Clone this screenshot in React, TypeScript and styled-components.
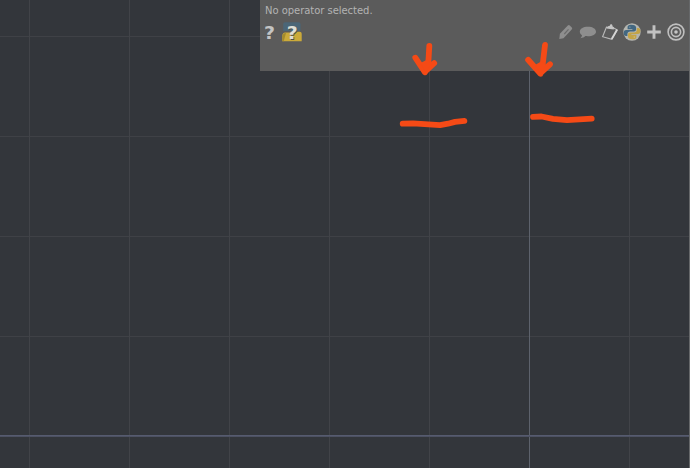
import React from "react";
import styled, { createGlobalStyle } from "styled-components";

const GlobalStyle = createGlobalStyle`
  *, *::before, *::after { box-sizing: border-box; }
  html, body { margin: 0; background: #33363b; overflow: hidden; }
`;

const Network = styled.main`
  position: relative;
  width: 690px;
  height: 468px;
  overflow: hidden;
  display: flex;
  flex-direction: column;
  align-items: flex-end;
  border-right: 1px solid #66686a;
  background-color: #33363b;
  background-image:
    linear-gradient(#5b6075, #484c5c),
    linear-gradient(#5d626c, #5d626c),
    linear-gradient(90deg, transparent 29px, #414348 29px, #414348 30px, transparent 30px),
    linear-gradient(transparent 36px, #3f4146 36px, #3f4146 37px, transparent 37px);
  background-size: 100% 2px, 1px 100%, 100px 100%, 100% 100px;
  background-position: 0 435px, 529px 0, 0 0, 0 0;
  background-repeat: no-repeat, no-repeat, repeat-x, repeat-y;
`;

const ParameterPanel = styled.header`
  width: 429px;
  height: 71px;
  background: #5b5b5b;
`;

const Status = styled.div`
  height: 21px;
  padding: 4px 0 0 5px;
  color: #b3b3b3;
  font: 10px/13px "DejaVu Sans", sans-serif;
  letter-spacing: -0.04px;
  white-space: nowrap;
`;

const Toolbar = styled.div`
  display: flex;
  justify-content: space-between;
  height: 22px;
  padding: 0 3px 0 0;
`;

const ToolGroup = styled.div`
  display: flex;
  align-items: center;
  gap: 2px;
`;

const ToolButton = styled.button`
  display: grid;
  place-items: center;
  width: 20px;
  height: 22px;
  padding: 0;
  border: 0;
  background: transparent;
`;

const Icon = styled.svg`
  display: block;
  width: 20px;
  height: 20px;
  overflow: visible;
`;

const HelpMark = styled.text`
  font: bold 18px "DejaVu Sans", sans-serif;
  text-anchor: middle;
`;

const Annotations = styled.svg`
  position: absolute;
  inset: 0;
  width: 690px;
  height: 468px;
  pointer-events: none;
`;

function HelpIcon() {
  return (
    <Icon viewBox="0 0 20 20">
      <HelpMark x="9.6" y="16.7" fill="#c4c4c4" textLength="11" lengthAdjust="spacingAndGlyphs">?</HelpMark>
    </Icon>
  );
}

function PythonHelpIcon() {
  return (
    <Icon viewBox="0 0 20 20">
      <path d="M1.2 9V2Q1.2.3 3 .3h13.5q2 0 2 1.9V9Z" fill="#4b6677" />
      <path d="M.3 19.3v-5.6q0-2.7 3-3.1h5.2v-.8h9.2q2 0 2 2v7.5Z" fill="#cbaa3a" />
      <path d="M.3 19.3v-5.1q.2-2.9 3.8-3.5L1.7 19.3Z" fill="#a48a2d" />
      <HelpMark x="11" y="17.5" fill="#4e5149" textLength="11" lengthAdjust="spacingAndGlyphs" aria-hidden="true">?</HelpMark>
      <HelpMark x="10.2" y="16.7" fill="#dedfd7" textLength="11" lengthAdjust="spacingAndGlyphs">?</HelpMark>
    </Icon>
  );
}

function PencilIcon() {
  return (
    <Icon viewBox="0 0 20 20">
      <path d="M3.9 11.8 11.8 3.5q1-.9 2 0l2 2q.9 1-.1 2l-8.2 8.7-4.2.7Z" fill="#8e8e8e" />
      <path d="m8.3 12 4.2-4.7" stroke="#6b6b6b" strokeWidth="1.2" />
    </Icon>
  );
}

function CommentIcon() {
  return (
    <Icon viewBox="0 0 20 20">
      <path d="M10 4.7c-5 0-8.2 2-8.2 5 0 1.5.9 2.7 2.2 3.5-.1 1.2-.8 2.2-1.5 3 2.2-.2 3.8-1 4.9-2.1 6.2.7 10.6-1.3 10.6-4.4 0-3-3.3-5-8-5Z" fill="#8e8e8e" />
    </Icon>
  );
}

function ClipboardIcon() {
  return (
    <Icon viewBox="0 0 20 20" fill="none">
      <path d="M6.4 5.2 2.6 14.7l9.2 2.7 5.5-9.4-4-2.3Z" stroke="#b9b9b9" strokeWidth="1.1" />
      <path d="m11.7 17 5.3-9.2" stroke="#d5d5d5" strokeWidth="1.8" />
      <path d="m6.5 6.6 2-2.5 1.2-.2c.2-2.2 3-2 2.8.4l1.6 1.2-.4 2Z" fill="#c4c4c4" />
    </Icon>
  );
}

function PythonIcon() {
  return (
    <Icon viewBox="0 0 20 20">
      <circle cx="10" cy="10" r="8.7" fill="#b5b6b0" />
      <path d="M8.8 2.7c-2 .1-3.2.8-3.2 2.4v2.2h4.8V8H4.1C2.4 8 1.7 9.2 1.7 11c0 1.9.8 3 2.3 3h1.4v-1.9c0-1.6 1.2-2.6 2.7-2.6h3.8c1.3 0 2.2-.9 2.2-2.2V5.6c0-1.7-1.7-3-5.3-2.9Z" fill="#426781" />
      <path d="M11.2 17.3c2-.1 3.2-.8 3.2-2.4v-2.1h-5v-.7h6.5c1.7 0 2.4-1.2 2.4-3 0-1.9-.8-3-2.3-3h-1.1v1.6c0 1.6-1.2 2.8-2.8 2.8H8.2c-1.3 0-2.2.9-2.2 2.2v1.8c0 1.7 1.7 2.9 5.2 2.8Z" fill="#c3a447" />
      <circle cx="7.9" cy="5.1" r=".6" fill="#9eb0b8" />
      <circle cx="12.2" cy="15" r=".6" fill="#e0d8ac" />
    </Icon>
  );
}

function PlusIcon() {
  return (
    <Icon viewBox="0 0 20 20">
      <path d="M10 3.2v13.6M3.2 10h13.6" stroke="#c1c1c1" strokeWidth="2.9" />
    </Icon>
  );
}

function TargetIcon() {
  return (
    <Icon viewBox="0 0 20 20" fill="none" stroke="#bfbfbf" strokeWidth="1.6">
      <circle cx="10" cy="10" r="7.9" />
      <circle cx="10" cy="10" r="4.6" />
      <circle cx="10" cy="10" r="1.8" fill="#c5c5c5" stroke="none" />
    </Icon>
  );
}

export default function App() {
  return (
    <>
      <GlobalStyle />
      <Network>
        <ParameterPanel>
          <Status>No operator selected.</Status>
          <Toolbar>
            <ToolGroup>
              <ToolButton aria-label="Operator help"><HelpIcon /></ToolButton>
              <ToolButton aria-label="Python help"><PythonHelpIcon /></ToolButton>
            </ToolGroup>
            <ToolGroup>
              <ToolButton aria-label="Edit"><PencilIcon /></ToolButton>
              <ToolButton aria-label="Comment"><CommentIcon /></ToolButton>
              <ToolButton aria-label="Copy parameters"><ClipboardIcon /></ToolButton>
              <ToolButton aria-label="Python"><PythonIcon /></ToolButton>
              <ToolButton aria-label="Add"><PlusIcon /></ToolButton>
              <ToolButton aria-label="Target"><TargetIcon /></ToolButton>
            </ToolGroup>
          </Toolbar>
        </ParameterPanel>
        <Annotations viewBox="0 0 690 468" fill="none" stroke="#f54a16" strokeWidth="5.8" strokeLinecap="round" strokeLinejoin="round">
          <path d="M429.3 45.8 428.1 67 425 72.3 415.3 57.7M425.4 71.5 434.2 63.2" />
          <path d="M545 45 542.5 66 540.5 73.7 528.1 59.8M541 72.5 550 64.3" />
          <path d="m420.5 63 7-3.5 4 4.5-6 8ZM535 65l7-4 4 5-5.5 7.5Z" fill="#f54a16" stroke="none" />
          <path d="M402.7 123.6 413 123.4 440 125.2 448 123.7 455 121.9 464.4 120.8" />
          <path d="M533 116.8 541.5 116.5 553 118.8 567 120.1 591.7 118.7" />
        </Annotations>
      </Network>
    </>
  );
}
